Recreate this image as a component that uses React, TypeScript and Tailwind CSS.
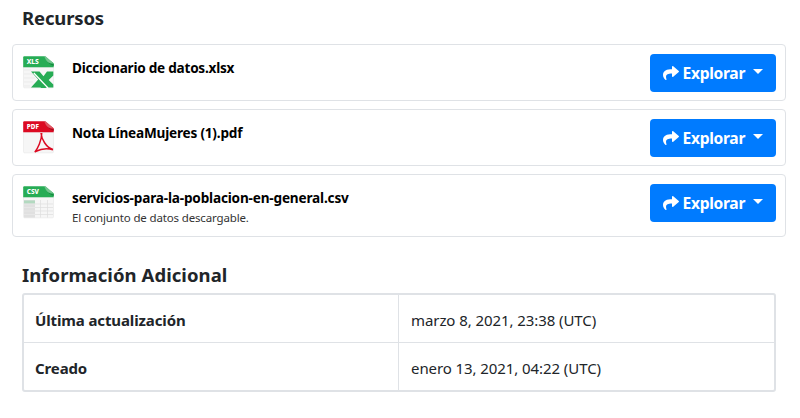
import React from "react";
import { FaShare } from "react-icons/fa";

type Kind = "xls" | "pdf" | "csv";

function FileIcon({ kind }: { kind: Kind }) {
  const main = kind === "pdf" ? "#dc0a22" : "#27ac55";
  const fold = kind === "pdf" ? "#dd5a66" : "#74c48f";
  const shade = kind === "pdf" ? "#a30d1d" : "#178a40";
  return (
    <svg width="32" height="33" viewBox="0 0 32 33" className="block shrink-0">
      <path d="M0.5 11H30.5V30.7Q30.5 31.9 29.3 31.9H1.7Q0.5 31.9 0.5 30.7Z" fill="#f6f6f6" stroke="#e8e8e8" strokeWidth="0.6" />
      {kind === "xls" && (
        <g>
          <path d="M1 14H8M1 18H10M1 22H12M1 26H10M1 30H7" stroke="#ebebeb" />
          <path d="M8 15.5H16.5L20.5 20.3L24 15.5H30.3V19.4L25.7 24L30.3 28.5V31.5H8L15.2 23.5Z" fill={main} />
          <path d="M10.8 17L25 32" stroke="#fff" strokeWidth="1.3" />
          <path d="M17.5 32L20 28.2L23.5 32Z" fill={main} />
        </g>
      )}
      {kind === "pdf" && (
        <path d="M18 12C18.5 18 23 26.5 30 28.5M18.7 12C19 19 14.5 28 11.8 31.2M12.5 30.5C17 28.2 24 27 30 28.7" fill="none" stroke={main} strokeWidth="1.5" />
      )}
      {kind === "csv" && (
        <g>
          <path d="M1 14H12V31.6H1Z" fill="#e0e0e0" />
          <path d="M1 14.5H12V17.5H1Z" fill="#b3d9c0" />
          <path d="M1 18H12M1 21.5H12M1 25H12M1 28.5H12" stroke="#eee" strokeWidth="0.5" />
          <path d="M12 18H30M12 21.5H30M12 25H30M12 28.5H30M17.5 14V31.6M24.5 14V31.6" stroke="#dedede" strokeWidth="0.7" />
        </g>
      )}
      <path d="M0.2 11.3V1.2Q0.2 0.2 1.2 0.2H22L30.7 7.2V11.3Z" fill={main} />
      <path d="M23 4Q26 8 30.7 8V10Q26 8.6 23 4Z" fill={shade} />
      <path d="M20.5 0.2H22.5L30.7 7.4Q25.2 8 22.7 3.5Q22 1.3 20.5 0.2Z" fill={fold} />
      <text x="3.7" y="8.2" textLength="12.2" lengthAdjust="spacingAndGlyphs" fill="#fff" className="font-['Noto_Sans',sans-serif] text-[7px] font-extrabold">{kind.toUpperCase()}</text>
    </svg>
  );
}

function ExploreButton() {
  return (
    <button className="flex h-[37.5px] w-[126px] shrink-0 items-center rounded-[4px] bg-[#007bff] pl-[12.5px] text-white">
      <FaShare className="size-4 shrink-0" />
      <span className="ml-1 w-[63px] text-left text-[15.6px] leading-6 font-bold tracking-[-0.3px] whitespace-nowrap">Explorar</span>
      <span className="mb-[2px] ml-[7.5px] border-x-[5px] border-t-[5px] border-x-transparent border-t-white" />
    </button>
  );
}

interface ResourceProps {
  kind: Kind;
  title: string;
  titleClass: string;
  cardClass: string;
  note?: string;
}

function Resource({ kind, title, titleClass, cardClass, note }: ResourceProps) {
  return (
    <li className={`flex items-start rounded-[4px] border border-[#dfe2e6] pt-[9px] pr-[9px] pl-[10px] ${cardClass}`}>
      <div className="mt-[2px]"><FileIcon kind={kind} /></div>
      <div className="ml-[17px] flex-1 pt-[4px]">
        <div className={`text-[13.6px] leading-5 font-bold whitespace-nowrap text-black ${titleClass}`}>{title}</div>
        {note && <p className="text-[11.5px] leading-[19px] tracking-[-0.15px] whitespace-nowrap text-[#333]">{note}</p>}
      </div>
      <ExploreButton />
    </li>
  );
}

export default function App() {
  return (
    <main className="h-[418px] w-[800px] overflow-hidden bg-white pt-[6px] pr-[14px] pl-3 font-['Noto_Sans','Open_Sans',sans-serif] text-[#212529]">
      <h2 className="pl-[10px] text-[18.5px] leading-6 font-bold tracking-[-0.15px]">Recursos</h2>
      <ul className="mt-[14px] flex flex-col gap-2">
        <Resource kind="xls" title="Diccionario de datos.xlsx" titleClass="tracking-[-0.25px]" cardClass="h-[57px]" />
        <Resource kind="pdf" title="Nota LíneaMujeres (1).pdf" titleClass="tracking-[-0.2px]" cardClass="h-[57px]" />
        <Resource kind="csv" title="servicios-para-la-poblacion-en-general.csv" titleClass="tracking-[-0.18px]" cardClass="h-[63px]" note="El conjunto de datos descargable." />
      </ul>
      <section className="mt-[26px] pr-[10px] pl-[10px]">
        <h2 className="text-[18.5px] leading-6 font-bold tracking-[0.06px]">Información Adicional</h2>
        <dl className="mt-[6px] grid h-[99px] grid-cols-[375px_1fr] grid-rows-[48px_1fr] rounded-[3px] border-2 border-[#dfe2e6] text-[15px]">
          <dt className="flex items-center border-r border-b border-[#dfe2e6] pt-[3px] pl-[11px] font-bold tracking-[-0.12px]">Última actualización</dt>
          <dd className="flex items-center border-b border-[#dfe2e6] pt-[3px] pl-[12px] tracking-[-0.08px]">marzo 8, 2021, 23:38 (UTC)</dd>
          <dt className="flex items-center border-r border-[#dfe2e6] pt-[3px] pl-[11px] font-bold tracking-[-0.12px]">Creado</dt>
          <dd className="flex items-center pt-[3px] pl-[12px] tracking-[-0.08px]">enero 13, 2021, 04:22 (UTC)</dd>
        </dl>
      </section>
    </main>
  );
}
